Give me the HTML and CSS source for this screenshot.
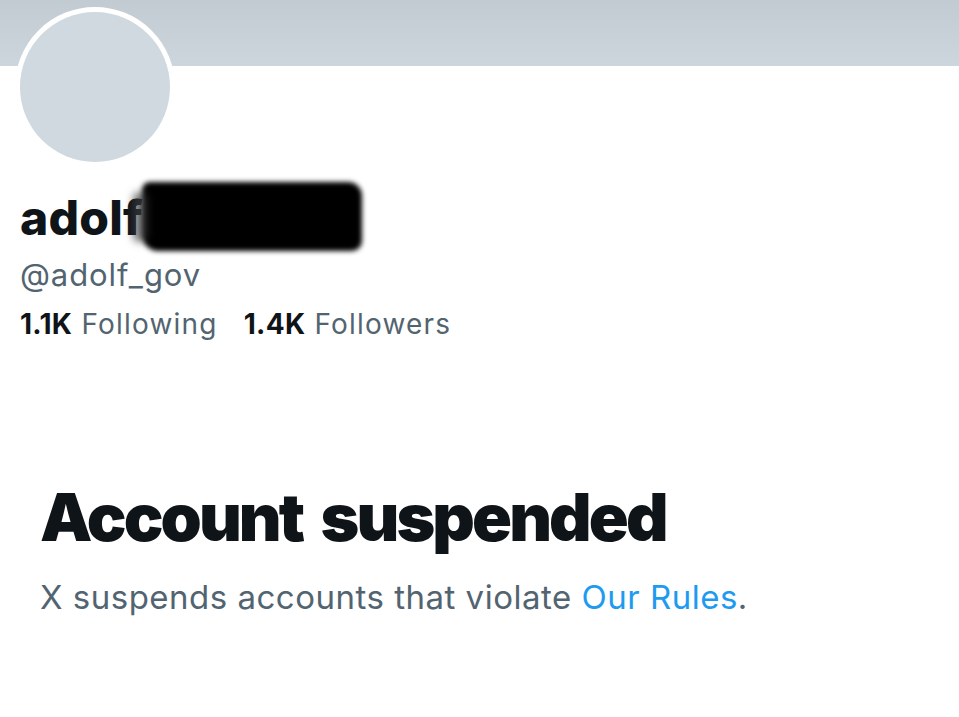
FILE: index.html
```html
<!DOCTYPE html>
<html lang="en">
<head>
<meta charset="utf-8">
<title>Account suspended</title>
<link rel="stylesheet" href="styles.css">
</head>
<body>
<div class="page">
  <div class="banner"></div>
  <div class="avatar"><div class="avatar-inner"></div></div>
  <div class="profile">
    <div class="name-row">
      <h1 class="name">adolf</h1>
      <span class="redaction"></span>
    </div>
    <div class="handle">@adolf_gov</div>
    <div class="stats">
      <span class="stat"><b>1.1K</b> Following</span>
      <span class="stat"><b>1.4K</b> Followers</span>
    </div>
  </div>
  <div class="notice">
    <h2 class="notice-title">Account suspended</h2>
    <p class="notice-text">X suspends accounts that violate <a href="#" class="link">Our Rules</a>.</p>
  </div>
</div>
</body>
</html>
```

FILE: styles.css
```css
html, body {
  margin: 0;
  padding: 0;
  background: #ffffff;
}
.page {
  width: 959px;
  height: 717px;
  overflow: hidden;
  font-family: Inter, "Liberation Sans", Arial, sans-serif;
  color: #0f1419;
}
.banner {
  height: 66px;
  background: linear-gradient(180deg, #c3cbd2 0%, #cdd6dc 100%);
}
.avatar {
  width: 150px;
  height: 150px;
  margin: -59px 0 0 15px;
  border: 5px solid #ffffff;
  border-radius: 50%;
  background: #ffffff;
  position: relative;
}
.avatar-inner {
  width: 150px;
  height: 150px;
  border-radius: 50%;
  background: #cfd9df;
}
.profile {
  padding-left: 20px;
}
.name-row {
  position: relative;
  height: 54px;
  margin-top: 24px;
}
.name {
  margin: 0;
  font-size: 48px;
  line-height: 54px;
  font-weight: 800;
  letter-spacing: 0.2px;
}
.redaction {
  position: absolute;
  left: 122px;
  top: -9px;
  width: 220px;
  height: 69px;
  background: #000000;
  border-radius: 8px 14px 10px 16px;
  filter: blur(2.5px);
}
.redaction::before {
  content: "";
  position: absolute;
  left: -9px;
  top: 10px;
  width: 14px;
  height: 50px;
  background: rgba(60, 60, 60, 0.7);
  border-radius: 6px;
  filter: blur(3px);
}
.handle {
  margin-top: 12px;
  font-size: 31px;
  line-height: 36px;
  color: #536471;
  letter-spacing: 0.9px;
}
.stats {
  display: flex;
  gap: 26px;
  margin-top: 14px;
  font-size: 28px;
  line-height: 34px;
  color: #536471;
  letter-spacing: 1.2px;
}
.stat b {
  color: #0f1419;
  font-weight: 700;
  letter-spacing: 0.3px;
}
.notice {
  padding-left: 40px;
  margin-top: 138px;
}
.notice-title {
  margin: 0;
  font-size: 66px;
  line-height: 76px;
  font-weight: 900;
  letter-spacing: -2.9px;
  word-spacing: 8px;
}
.notice-text {
  margin: 22px 0 0;
  font-size: 33px;
  line-height: 40px;
  color: #536471;
  letter-spacing: 0.5px;
}
.link {
  color: #1d9bf0;
  text-decoration: none;
}
```
